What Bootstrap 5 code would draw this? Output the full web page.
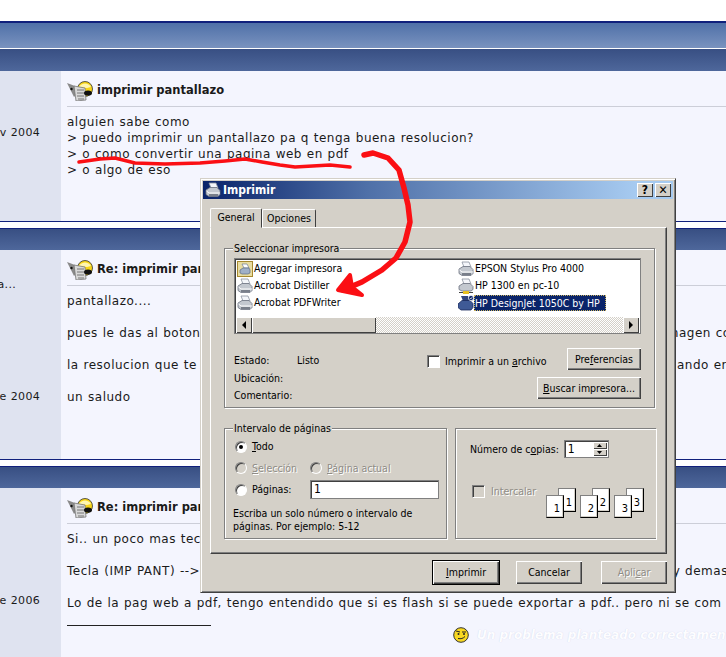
<!DOCTYPE html>
<html lang="es">
<head>
<meta charset="utf-8">
<title>imprimir pantallazo</title>
<link href="https://cdn.jsdelivr.net/npm/bootstrap@5.3.0/dist/css/bootstrap.min.css" rel="stylesheet">
<style>
html,body{height:657px;overflow:hidden;background:#fff}
body{font:12px/16px "DejaVu Sans",sans-serif;letter-spacing:.5px;word-spacing:.5px;color:#1a1a1a;position:relative}
.top-white{height:21px}
.navy{height:2px;background:#10207c}
.bar-a{height:25px;background:linear-gradient(#4f70a8,#7a93bf)}
.sep{height:1px;background:#fff}
.sep-navy{height:1px;background:#10207c}
.bar-b{height:21px;background:linear-gradient(#384f83,#4e679b)}
.bar-b.first{height:22px}
.gap-white{height:6px;background:#fff}
.post{background:#f4f5fe}
.p1{height:150px}.p2{height:209px}.p3{height:170px}
.side{width:61px;flex:none;background:#dfe3f0;padding-right:21px;display:flex;justify-content:flex-end;white-space:nowrap;font-size:11px;letter-spacing:.3px}
.p1 .side{padding-top:54px}
.p2 .side{padding-top:27px}
.p3 .side{padding-top:105px}
.p2 .when{margin-top:96px}
.p2 .who{margin-right:24px}
.stack{display:flex;flex-direction:column;align-items:flex-end}
.main{flex:1;min-width:0;padding-left:6px;white-space:nowrap;overflow:hidden}
.ttl{height:25px;padding-top:10px;display:flex;gap:4px;font-weight:700;font-size:11.500px;letter-spacing:0;word-spacing:0;line-height:16px;align-items:flex-start;border-bottom:1px solid #ccced8;box-sizing:content-box}
.ttl b{padding-top:1px}
.txt{padding-top:7px}
.rule{width:144px;height:1px;background:#222;margin-top:14px}
.sig{display:flex;align-items:center;gap:8px;margin-left:386px;margin-top:1px;font-style:italic;font-weight:700;font-size:12px;letter-spacing:0;word-spacing:0;color:#fdfdff;text-shadow:0 0 1px #cdd3e8}
.ink{position:absolute;left:0;top:0;pointer-events:none;z-index:5}

.win{position:absolute;left:200px;top:178px;width:476px;height:415px;background:#d4d0c8;padding:3px;
 border:1px solid;border-color:#d4d0c8 #404040 #404040 #d4d0c8;box-shadow:inset 1px 1px 0 #fff,inset -1px -1px 0 #808080;
 font:10.500px/13px "DejaVu Sans Condensed","DejaVu Sans",sans-serif;font-stretch:condensed;letter-spacing:0;word-spacing:0;color:#000;z-index:2}
.cap{height:18px;margin-top:-1px;margin-left:-1px;margin-right:-1px;background:linear-gradient(90deg,#0a246a 0,#4f70a8 35%,#a6caf0 92%);color:#fff;font-weight:700;font-size:12px;display:flex;align-items:center;padding:0 2px;gap:2px}
.cap-btn{width:16px;height:14px;background:#d4d0c8;box-shadow:inset 1px 1px 0 #fff,inset -1px -1px 0 #404040;color:#000;display:flex;align-items:center;justify-content:center;font-weight:700;font-size:12px;line-height:1}
.strip{margin:8px 0 0 6px;height:20px;align-items:flex-end;border:0;flex-wrap:nowrap}
.strip .tabx{background:#d4d0c8;border:0;border-top:1px solid #fff;border-left:1px solid #fff;border-right:1px solid #404040;border-radius:2px 2px 0 0;height:18px;width:54px;display:flex;align-items:center;justify-content:center}
.strip .tabx.on{height:20px;width:52px;border-bottom:1px solid #d4d0c8;margin-bottom:-1px;position:relative;z-index:1;padding-bottom:2px}
.pane{margin-left:6px;width:457px;height:327px;border:1px solid;border-color:#fff #404040 #404040 #fff;box-shadow:inset -1px -1px 0 #808080;padding:20px 0 0 13px}
.grp{position:relative;border:1px solid #808080;box-shadow:1px 1px 0 #fff,inset 1px 1px 0 #fff}
.leg{position:absolute;left:8px;top:-7px;background:#d4d0c8;padding:0 1px;line-height:13px}
.g1{width:431px;height:160px;padding:9px 0 0 9px}
.lst{width:407px;height:76px;background:#fff;border:1px solid #808080;box-shadow:inset 1px 1px 0 #404040;display:flex;flex-direction:column;padding:1px 1px 0 2px}
.lst-items{flex:1;display:grid;grid-template-columns:221px 1fr;grid-auto-flow:column;grid-template-rows:repeat(3,17px)}
.it{display:flex;align-items:center;gap:0;white-space:nowrap}
.it span{padding:0 1px}
.it .sel{background:#0a246a;color:#fff;outline:1px dotted #c9b25e;outline-offset:-1px;height:16px;line-height:16px;width:132px}
.sb{height:16px;margin:0 0 0 -1px;display:flex;background:repeating-conic-gradient(#fff 0 25%,#d4d0c8 0 50%) 0 0/2px 2px}
.sb-b{width:16px;height:16px;background:#d4d0c8;box-shadow:inset 1px 1px 0 #fff,inset -1px -1px 0 #404040;display:flex;align-items:center;justify-content:center;flex:none}
.sb-t{width:124px;height:16px;background:#d4d0c8;box-shadow:inset 1px 1px 0 #fff,inset -1px -1px 0 #404040}
.sb-f{flex:1}
.info{margin-top:14px;width:407px}
.info-l{width:193px;padding-top:4px;flex:none}
.rw{height:17.500px;display:flex;align-items:center}
.rw i{font-style:normal;width:63px}
.info-m{flex:1;min-width:0;padding-top:7px;display:flex;gap:5px;align-items:flex-start;white-space:nowrap}
.info-m span{line-height:13px}
.info-r{gap:7px}
.wb{--bs-btn-padding-x:0;--bs-btn-padding-y:0;--bs-btn-font-size:10.500px;--bs-btn-border-radius:0;--bs-btn-border-width:0;--bs-btn-color:#000;--bs-btn-bg:#d4d0c8;--bs-btn-hover-bg:#d4d0c8;--bs-btn-hover-color:#000;--bs-btn-disabled-color:#8f8c86;--bs-btn-disabled-bg:#d4d0c8;--bs-btn-disabled-opacity:1;line-height:13px;font-family:inherit;font-stretch:condensed;box-shadow:inset 1px 1px 0 #fff,inset -1px -1px 0 #404040,inset -2px -2px 0 #808080}
.b-pref{width:74px;height:22px}.b-busc{width:104px;height:22px}
.b-foot{width:66px;height:23px}
.b-def{box-shadow:0 0 0 1px #000,inset 1px 1px 0 #fff,inset -1px -1px 0 #404040,inset -2px -2px 0 #808080}
.b-off{text-shadow:1px 1px 0 #fff;margin-left:2px}
.lower{margin-top:20px}
.g2{width:223px;height:111px;padding:7px 0 0 10px}
.g3{width:201px;height:111px;margin-left:8px;border-right:0;padding:11px 0 0 14px}
.rd-row{height:21.500px;display:flex;align-items:center}
.rd-cell{width:75px;display:flex;align-items:center;gap:5px;flex:none}
.rd{width:12px;height:12px;border-radius:50%;background:#fff;border:1px solid;border-color:#808080 #fff #fff #808080;box-shadow:inset 1px 1px 0 #404040;flex:none;display:flex;align-items:center;justify-content:center}
.rd.dot::after{content:"";width:4px;height:4px;border-radius:50%;background:#000}
.rd.off{background:#d4d0c8}
.mute{color:#8f8c86;text-shadow:1px 1px 0 #fff}
.fld{width:129px;height:19px;background:#fff;border:1px solid #808080;box-shadow:inset 1px 1px 0 #404040;padding:2px 0 0 3px;font-size:12px}
.hlp{margin:6px 0 0 -2px}
.cb{width:13px;height:13px;background:#fff;border:1px solid;border-color:#808080 #fff #fff #808080;box-shadow:inset 1px 1px 0 #404040;flex:none}
.cb.off{background:#d4d0c8}
.spin{width:45px;height:18px;background:#fff;border:1px solid #808080;box-shadow:inset 1px 1px 0 #404040;padding:0 0 0 3px;font-size:12px;margin-left:5px}
.spin-n{flex:1;line-height:16px}
.spin-b{width:15px;flex:none;display:flex;flex-direction:column;padding:1px 1px 1px 0}
.spin-b div{flex:1;background:#d4d0c8;box-shadow:inset 1px 1px 0 #fff,inset -1px -1px 0 #404040;display:flex;align-items:center;justify-content:center}
.coll{margin-top:30px;height:30px;align-items:flex-start}
.coll .cb{margin:-3px 0 0 2px}
.coll .mute{margin:-3px 0 0 6px;width:55px}
.pair{width:30px;height:30px;position:relative;margin-right:4px}
.pg{position:absolute;width:18px;background:#fff;border:1px solid #000;border-top-color:#808080;border-left-color:#808080;box-shadow:inset -1px -1px 0 #d4d0c8;display:flex;align-items:flex-end;justify-content:flex-end;padding:0 3px 2px 0;line-height:12px;font-size:11px}
.pg-b{left:12px;top:0;height:24px}
.pg-f{left:0;top:7px;height:23px}
.foot{margin:7px 0 0 0;width:463px;gap:17px;justify-content:flex-end}
</style>
</head>
<body>
<svg width="0" height="0" class="position-absolute">
 <defs>
  <symbol id="ico-thread" viewBox="0 0 26 20">
   <path d="M0 2 8 5 11 12 7 16Z" fill="#8a8a8a"/>
   <circle cx="18" cy="8" r="7.500" fill="#f7d417" stroke="#333" stroke-width=".8"/>
   <path d="M12 6a7 7 0 0 1 12 0l-4 1z" fill="#fff6b0"/>
   <path d="M7 5 18 7 19 19 9 20Z" fill="#d9d9d9" stroke="#777" stroke-width=".8"/>
   <path d="M10 9h7M10 12h7M10 15h7M11 18h6" stroke="#777" stroke-width="1"/>
   <ellipse cx="21" cy="12" rx="4" ry="2.600" fill="#111"/>
   <circle cx="4.500" cy="8" r="1.200" fill="#111"/>
  </symbol>
  <symbol id="ico-printer" viewBox="0 0 16 16">
   <path d="M4 1h7l2 5H6Z" fill="#f4f6fa" stroke="#8b93a0" stroke-width=".8"/>
   <path d="M1 8 5 5.500h7l3 3v4l-2 2H4l-3-2Z" fill="#c3c8cf" stroke="#6c7280" stroke-width=".8"/>
   <path d="M1.500 9 4 11h11" fill="none" stroke="#fff" stroke-width="1"/>
   <path d="M4 13h9" stroke="#5a606c" stroke-width="1.400"/>
  </symbol>
  <symbol id="ico-add" viewBox="0 0 16 16">
   <rect x=".5" y=".5" width="15" height="15" fill="#e8dca0" stroke="#a88a30"/>
   <path d="M5 3h5l2 4H7Z" fill="#fff" stroke="#6f7d94" stroke-width=".7"/>
   <path d="M3 9 6 7h6l1 2v3l-2 1H5l-2-1Z" fill="#9fb0c8" stroke="#5b6a84" stroke-width=".7"/>
  </symbol>
  <symbol id="ico-net" viewBox="0 0 16 16">
   <path d="M4 1h7l2 5H6Z" fill="#f4f6fa" stroke="#8b93a0" stroke-width=".8"/>
   <path d="M1 8 5 5.500h7l3 3v3l-2 1.500H4l-3-1.500Z" fill="#c3c8cf" stroke="#6c7280" stroke-width=".8"/>
   <path d="M1 14.500h14" stroke="#444" stroke-width="1"/>
   <path d="M5 13h6v3H5Z" fill="#e8c020"/>
  </symbol>
  <symbol id="ico-sel" viewBox="0 0 16 16">
   <path d="M3 1h7l2 5H5Z" fill="#33457e"/>
   <path d="M0 9 4 5.500h8l3 3v4l-2 2.500H3l-3-2.500Z" fill="#3f5a96" stroke="#1b2a5c" stroke-width=".8"/>
   <circle cx="13" cy="3" r="2.600" fill="#0a246a" stroke="#fff" stroke-width=".7"/>
   <path d="M11.800 3 12.800 4 14.300 2" fill="none" stroke="#fff" stroke-width=".7"/>
  </symbol>
  <symbol id="ico-smile" viewBox="0 0 16 16">
   <circle cx="8" cy="8" r="7.300" fill="#f8d820" stroke="#333" stroke-width="1"/>
   <path d="M3 4 7 5M9 5h4" stroke="#222" stroke-width="1"/>
   <circle cx="5.500" cy="7" r="1" fill="#222"/><circle cx="11" cy="7" r="1" fill="#222"/>
   <path d="M5 11.500c3 .6 5 0 7-2" fill="none" stroke="#222" stroke-width="1"/>
  </symbol>
 </defs>
</svg>

<div class="top-white"></div>
<div class="navy"></div>
<div class="bar-a"></div>
<div class="sep"></div>
<div class="bar-b first"></div>

<div class="post p1 d-flex">
 <div class="side"><span>Nov 2004</span></div>
 <div class="main">
  <div class="ttl"><svg width="26" height="20"><use href="#ico-thread"/></svg><b>imprimir pantallazo</b></div>
  <div class="txt">alguien sabe como<br>&gt; puedo imprimir un pantallazo pa q tenga buena resolucion?<br>&gt; o como convertir una pagina web en pdf<br>&gt; o algo de eso</div>
 </div>
</div>
<div class="sep-navy"></div>
<div class="gap-white"></div>
<div class="sep-navy"></div>
<div class="bar-b"></div>

<div class="post p2 d-flex">
 <div class="side"><div class="stack"><span class="who">Aragona...</span><span class="when">June 2004</span></div></div>
 <div class="main">
  <div class="ttl"><svg width="26" height="20"><use href="#ico-thread"/></svg><b>Re: imprimir pantallazo</b></div>
  <div class="txt">pantallazo....<br><br>pues le das al boton de imprimir pantalla y los pegas en el programa paint, y ya tienes la imagen com<br><br>la resolucion que te da es la de la pantalla, asi que ya puedes ir subiendolas poco a poco cuando en c<br><br>un saludo</div>
 </div>
</div>
<div class="sep-navy"></div>
<div class="gap-white"></div>
<div class="sep-navy"></div>
<div class="bar-b"></div>

<div class="post p3 d-flex">
 <div class="side"><span>June 2006</span></div>
 <div class="main">
  <div class="ttl"><svg width="26" height="20"><use href="#ico-thread"/></svg><b>Re: imprimir pantallazo</b></div>
  <div class="txt">Si.. un poco mas tecnico<br><br>Tecla (IMP PANT) --&gt; copia la pantalla al portapapeles y luego a programa paint, photoshop y demas<br><br>Lo de la pag web a pdf, tengo entendido que si es flash si se puede exportar a pdf.. pero ni se com</div>
  <div class="rule"></div>
  <div class="sig"><svg width="16" height="16" class="flex-shrink-0"><use href="#ico-smile"/></svg><span>Un problema planteado correctamente est&aacute; medio resuelto</span></div>
 </div>
</div>

<div class="win">
 <div class="cap">
  <svg width="16" height="16"><use href="#ico-printer"/></svg>
  <span class="flex-grow-1">Imprimir</span>
  <span class="cap-btn">?</span>
  <span class="cap-btn">&#x2715;</span>
 </div>
 <div class="nav strip">
  <div class="tabx on">General</div>
  <div class="tabx">Opciones</div>
 </div>
 <div class="pane">
  <div class="grp g1">
   <div class="leg">Seleccionar impresora</div>
   <div class="lst">
    <div class="lst-items">
     <div class="it"><svg width="16" height="16"><use href="#ico-add"/></svg><span>Agregar impresora</span></div>
     <div class="it"><svg width="16" height="16"><use href="#ico-printer"/></svg><span>Acrobat Distiller</span></div>
     <div class="it"><svg width="16" height="16"><use href="#ico-printer"/></svg><span>Acrobat PDFWriter</span></div>
     <div class="it"><svg width="16" height="16"><use href="#ico-printer"/></svg><span>EPSON Stylus Pro 4000</span></div>
     <div class="it"><svg width="16" height="16"><use href="#ico-net"/></svg><span>HP 1300 en pc-10</span></div>
     <div class="it"><svg width="16" height="16"><use href="#ico-sel"/></svg><span class="sel">HP DesignJet 1050C by HP</span></div>
    </div>
    <div class="sb">
     <div class="sb-b"><svg width="6" height="8"><path d="M5 0v8L1 4Z"/></svg></div>
     <div class="sb-t"></div>
     <div class="sb-f"></div>
     <div class="sb-b"><svg width="6" height="8"><path d="M1 0v8l4-4Z"/></svg></div>
    </div>
   </div>
   <div class="info d-flex">
    <div class="info-l">
     <div class="rw"><i>Estado:</i>Listo</div>
     <div class="rw">Ubicaci&oacute;n:</div>
     <div class="rw">Comentario:</div>
    </div>
    <div class="info-m"><div class="cb"></div><span>Imprimir a un <u>a</u>rchivo</span></div>
    <div class="info-r d-flex flex-column align-items-end">
     <button type="button" class="btn wb b-pref">Pre<u>f</u>erencias</button>
     <button type="button" class="btn wb b-busc"><u>B</u>uscar impresora...</button>
    </div>
   </div>
  </div>
  <div class="lower d-flex">
   <div class="grp g2">
    <div class="leg">Intervalo de p&aacute;ginas</div>
    <div class="rd-row"><div class="rd-cell"><span class="rd dot"></span><span><u>T</u>odo</span></div></div>
    <div class="rd-row"><div class="rd-cell"><span class="rd off"></span><span class="mute"><u>S</u>elecci&oacute;n</span></div><div class="rd-cell ms-0"><span class="rd off"></span><span class="mute text-nowrap"><u>P</u>&aacute;gina actual</span></div></div>
    <div class="rd-row"><div class="rd-cell"><span class="rd"></span><span>P&aacute;ginas:</span></div><div class="fld">1</div></div>
    <div class="hlp">Escriba un solo n&uacute;mero o intervalo de<br>p&aacute;ginas. Por ejemplo: 5-12</div>
   </div>
   <div class="grp g3">
    <div class="d-flex align-items-center"><span>N&uacute;mero de c<u>o</u>pias:</span>
     <div class="spin d-flex"><span class="spin-n">1</span><div class="spin-b"><div><svg width="5" height="3"><path d="M2.500 0 5 3H0Z"/></svg></div><div><svg width="5" height="3"><path d="M0 0h5L2.500 3Z"/></svg></div></div></div>
    </div>
    <div class="coll d-flex">
     <div class="cb off"></div><span class="mute">Intercalar</span>
     <div class="pair"><div class="pg pg-b">1</div><div class="pg pg-f">1</div></div>
     <div class="pair"><div class="pg pg-b">2</div><div class="pg pg-f">2</div></div>
     <div class="pair"><div class="pg pg-b">3</div><div class="pg pg-f">3</div></div>
    </div>
   </div>
  </div>
 </div>
 <div class="foot d-flex">
  <button type="button" class="btn wb b-foot b-def"><u>I</u>mprimir</button>
  <button type="button" class="btn wb b-foot">Cancelar</button>
  <button type="button" class="btn wb b-foot b-off" disabled>Apli<u>c</u>ar</button>
 </div>
</div>

<svg class="ink" width="726" height="657" fill="none" stroke="#fb0f14" stroke-linecap="round" stroke-linejoin="round">
 <path stroke-width="3.500" d="M79 162 100 159 115 158 135 163 165 164 200 163 225 161 245 159 262 162 280 165 295 167 330 165 350 167"/>
 <path stroke-width="5.500" d="M364 155 373 153 388 158 399 170 404 188 408 205 410 222 405 242 396 258 382 270 362 282 343 290"/>
 <path stroke-width="4" fill="#fb0f14" d="M350 275 338 290 362 295 352 287Z"/>
</svg>
<script src="https://cdn.jsdelivr.net/npm/bootstrap@5.3.0/dist/js/bootstrap.bundle.min.js"></script>
</body>
</html>
